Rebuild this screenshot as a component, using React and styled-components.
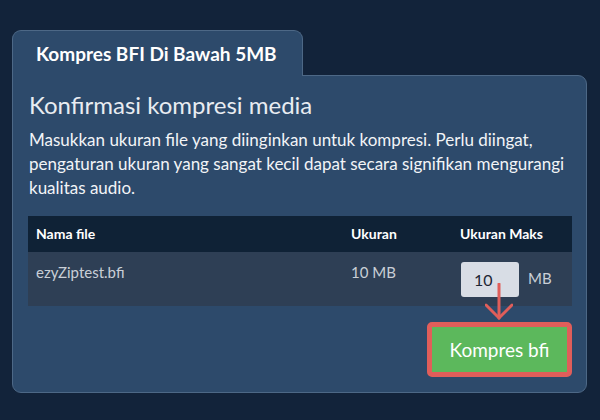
import styled, { createGlobalStyle } from 'styled-components';

const GlobalStyle = createGlobalStyle`
  html, body {
    margin: 0;
    background: #12233a;
    font-family: Lato, "Noto Sans", sans-serif;
  }
`;

const Page = styled.div`
  width: 600px;
  height: 420px;
  box-sizing: border-box;
  padding: 30px 13px 0 12px;
`;

const Tab = styled.div`
  position: relative;
  z-index: 1;
  width: 291px;
  height: 46px;
  box-sizing: border-box;
  margin-bottom: -1px;
  padding-left: 23px;
  display: flex;
  align-items: center;
  background: #2d4a6b;
  border: 1px solid #4d6886;
  border-bottom: none;
  border-radius: 9px 9px 0 0;
  color: #ffffff;
  font-size: 19px;
  font-weight: 700;
`;

const Card = styled.div`
  background: #2d4a6b;
  border: 1px solid #4d6886;
  border-radius: 0 9px 9px 9px;
  padding: 15px 14px 15px 15px;
`;

const Heading = styled.h2`
  margin: 0 0 8px 1px;
  font-size: 24px;
  font-weight: 400;
  line-height: 1.2;
  color: #e8ecf1;
`;

const Description = styled.p`
  margin: 0 0 16px 1px;
  font-size: 17px;
  line-height: 24px;
  color: #f2f4f7;
`;

const Table = styled.div`
  display: grid;
  grid-template-columns: 315px 109px 1fr;
`;

const HeadCell = styled.div`
  height: 36px;
  display: flex;
  align-items: center;
  padding-left: 8px;
  background: #0f2236;
  color: #ffffff;
  font-size: 14px;
  font-weight: 700;
`;

const Cell = styled.div`
  height: 54px;
  box-sizing: border-box;
  padding: ${(p) => (p.$input ? '10px 0 0 9px' : '12px 0 0 8px')};
  display: flex;
  align-items: ${(p) => (p.$input ? 'center' : 'flex-start')};
  align-self: start;
  background: #2e3f55;
  color: #c9cfd7;
  font-size: 15px;
  line-height: 17px;
`;

const SizeBox = styled.div`
  position: relative;
  align-self: flex-start;
`;

const SizeInput = styled.input`
  display: block;
  width: 58px;
  height: 35px;
  box-sizing: border-box;
  border: none;
  border-radius: 3px;
  padding: 0 0 0 13px;
  background: #d8dde5;
  color: #1d2734;
  font-family: Lato, "Noto Sans", sans-serif;
  font-size: 16px;
  outline: none;
`;

const Unit = styled.span`
  margin-left: 9px;
  margin-top: -1px;
  font-size: 15px;
  color: #c9cfd7;
  align-self: flex-start;
  line-height: 35px;
`;

const Arrow = styled.svg`
  position: absolute;
  left: 24px;
  top: 21px;
  pointer-events: none;
`;

const Footer = styled.div`
  display: flex;
  justify-content: flex-end;
  margin-top: 16px;
`;

const CompressButton = styled.button`
  width: 145px;
  height: 55px;
  box-sizing: border-box;
  border: 5px solid #e05e5a;
  border-radius: 5px;
  background: #5cb85c;
  color: #ffffff;
  font-family: Lato, "Noto Sans", sans-serif;
  font-size: 19px;
  font-weight: 400;
  cursor: pointer;
`;

export default function App() {
  return (
    <>
      <GlobalStyle />
      <Page>
        <Tab>Kompres BFI Di Bawah 5MB</Tab>
        <Card>
          <Heading>Konfirmasi kompresi media</Heading>
          <Description>
            Masukkan ukuran file yang diinginkan untuk kompresi. Perlu diingat,
            pengaturan ukuran yang sangat kecil dapat secara signifikan mengurangi
            kualitas audio.
          </Description>
          <Table>
            <HeadCell>Nama file</HeadCell>
            <HeadCell>Ukuran</HeadCell>
            <HeadCell>Ukuran Maks</HeadCell>
            <Cell>ezyZiptest.bfi</Cell>
            <Cell>10 MB</Cell>
            <Cell $input>
              <SizeBox>
                <SizeInput defaultValue="10" />
                <Arrow width="28" height="38" viewBox="0 0 28 38">
                  <g stroke="#e05e5a" strokeWidth="3" fill="none" strokeLinecap="round">
                    <line x1="14" y1="1" x2="14" y2="35" />
                    <polyline points="1,22 14,35 27,22" />
                  </g>
                </Arrow>
              </SizeBox>
              <Unit>MB</Unit>
            </Cell>
          </Table>
          <Footer>
            <CompressButton>Kompres bfi</CompressButton>
          </Footer>
        </Card>
      </Page>
    </>
  );
}
